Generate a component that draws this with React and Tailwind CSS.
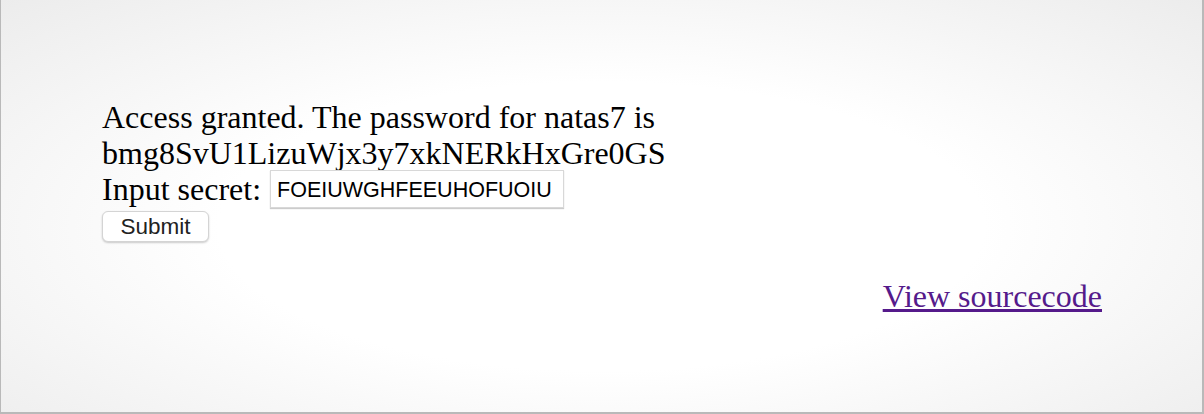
export default function App() {
  return (
    <div className="w-[1204px] h-[414px] overflow-hidden">
      <div
        className="w-full h-full border-l border-r-2 border-b-2 border-[#b9b9b9] bg-[radial-gradient(ellipse_at_50%_55%,#ffffff_0%,#ffffff_45%,#ececec_100%)] pl-[101px] pr-[100px] pt-[99px] text-black"
        style={{ fontFamily: '"Liberation Serif", "Times New Roman", serif' }}
      >
        <div className="text-[32px] leading-[36px]">
          <div>Access granted. The password for natas7 is</div>
          <div>bmg8SvU1LizuWjx3y7xkNERkHxGre0GS</div>
        </div>
        <div className="flex items-center h-[38px] mt-[-1px] text-[32px] leading-[36px]">
          <span>Input secret:</span>
          <input
            defaultValue="FOEIUWGHFEEUHOFUOIU"
            className="ml-[9px] w-[294px] h-[38px] border border-[#d8d8d8] shadow-[0_1px_1px_rgba(0,0,0,0.2)] bg-white pl-[6px] pr-[4px] pt-[2px] text-[21.5px] text-black outline-none"
            style={{ fontFamily: '"Liberation Sans", Arial, sans-serif' }}
          />
        </div>
        <div className="mt-[3px]">
          <button
            className="w-[107px] h-[31px] rounded-[6px] border border-[#d4d4d4] bg-white shadow-[0_1px_2px_rgba(0,0,0,0.2)] pt-[2px] text-[22.5px] text-[#222] leading-none"
            style={{ fontFamily: '"Liberation Sans", Arial, sans-serif' }}
          >
            Submit
          </button>
        </div>
        <div className="mt-[36px] text-right text-[32px] leading-[36px]">
          <a href="#" className="text-[#551a8b] underline">
            View sourcecode
          </a>
        </div>
      </div>
    </div>
  );
}
